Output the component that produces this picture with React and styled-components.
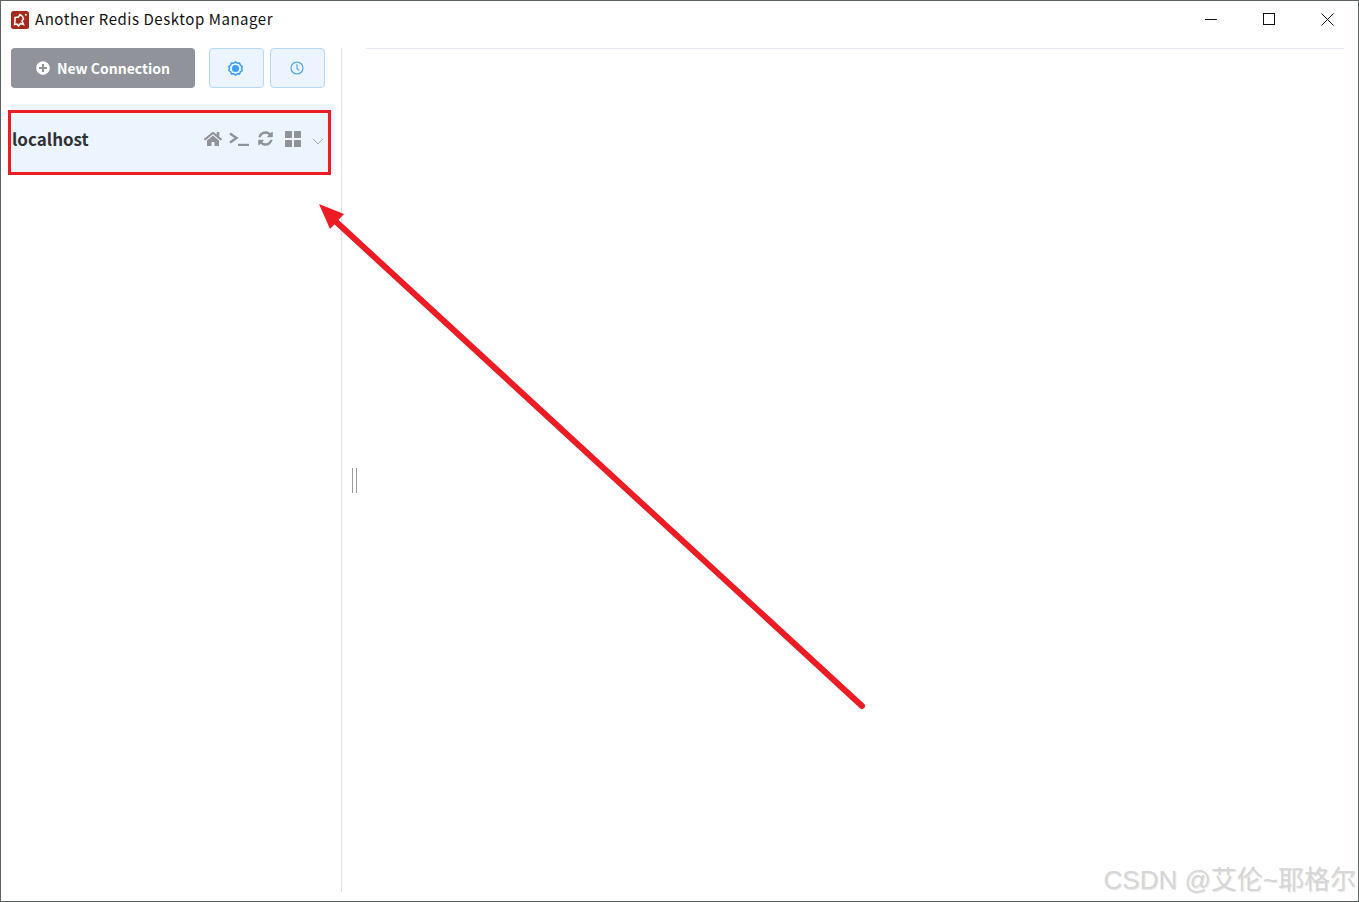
import React from 'react';
import styled, { createGlobalStyle } from 'styled-components';
import { FaHome, FaPlusCircle } from 'react-icons/fa';

const Global = createGlobalStyle`
  html, body { margin: 0; padding: 0; background: #fff; }
  * { box-sizing: border-box; }
`;

const Window = styled.div`
  position: relative;
  width: 1359px;
  height: 902px;
  overflow: hidden;
  border: 1px solid #5c6262;
  background: #fff;
  font-family: "Noto Sans CJK SC", "Noto Sans", sans-serif;
  display: flex;
  flex-direction: column;
`;

const TitleBar = styled.header`
  height: 37px;
  flex: none;
  display: flex;
  align-items: center;
  padding: 0 1px 0 10px;
`;

const TitleText = styled.span`
  margin: -2px 0 0 6px;
  font-size: 15px;
  letter-spacing: 0.55px;
  color: #111;
  flex: 1;
`;

const WinButton = styled.div`
  width: 58.5px;
  height: 37px;
  display: flex;
  align-items: center;
  justify-content: center;
  padding-bottom: 1px;
`;

const Body = styled.div`
  flex: 1;
  display: flex;
  padding: 10px 14px 9px 0;
  min-height: 0;
`;

const Sidebar = styled.aside`
  width: 341px;
  flex: none;
  padding: 0 7px 0 10px;
  border-right: 1px solid #dcdfe6;
`;

const Toolbar = styled.div`
  display: flex;
  height: 40px;
`;

const NewButton = styled.div`
  width: 184px;
  height: 40px;
  border-radius: 4px;
  background: #909399;
  color: #fff;
  display: flex;
  align-items: center;
  justify-content: center;
  gap: 7px;
  font-size: 14px;
  font-weight: 700;
  margin-right: 14px;
`;

const IconButton = styled.div`
  width: 55px;
  height: 40px;
  border: 1px solid #b3d8ff;
  border-radius: 4px;
  background: #ecf5ff;
  color: #409eff;
  display: flex;
  align-items: center;
  justify-content: center;
  padding-right: 2px;
  margin-right: 6px;
`;

const ConnRow = styled.div`
  margin-top: 16px;
  height: 70px;
  background: #ecf4fe;
  display: flex;
  align-items: center;
  padding: 2px 0 0 1px;
`;

const ConnName = styled.span`
  flex: 1;
  font-size: 17px;
  font-weight: 700;
  color: #303133;
  margin-top: -4px;
`;

const ConnIcons = styled.div`
  display: flex;
  align-items: center;
  color: #8f9298;
  margin-right: 10px;
  margin-top: -3px;
`;

const ConnIcon = styled.span`
  display: flex;
  margin-left: ${p => p.$gap}px;
  margin-top: ${p => p.$drop || 0}px;
`;

const HandleColumn = styled.div`
  width: 24px;
  flex: none;
  display: flex;
  align-items: center;
  padding: 20px 0 0 10px;
`;

const Handle = styled.div`
  width: 5px;
  height: 25px;
  border-left: 1px solid #9c9c9c;
  border-right: 1px solid #9c9c9c;
`;

const Main = styled.main`
  flex: 1;
  border-top: 1px solid #e6e9f2;
`;

const Highlight = styled.div`
  position: absolute;
  left: 7px;
  top: 109px;
  width: 323px;
  height: 65px;
  border: 3px solid #ed1c24;
`;

const Arrow = styled.svg`
  position: absolute;
  left: -1px;
  top: -1px;
  pointer-events: none;
`;

const Watermark = styled.div`
  position: absolute;
  right: 2px;
  bottom: 2px;
  font-family: "Liberation Sans", "Noto Sans CJK SC", sans-serif;
  font-size: 26px;
  line-height: 38px;
  color: #d6d6d6;
  text-shadow: 1px 1px 1px rgba(0, 0, 0, 0.1);
  white-space: nowrap;
`;

const Logo = () => (
  <svg width="18" height="18" viewBox="0 0 18 18">
    <rect width="18" height="18" rx="2.5" fill="#a32a1c" />
    <path d="M4 6.500l3.500-.5 1.500-2.500 2.500 2 1 2.500-1.500 2 1.500 3.500-3-1-2 2.500-1.500-2-2.500.5 .5-3.500z" fill="none" stroke="#fff" strokeWidth="1.500" />
    <circle cx="14.800" cy="3.800" r="1" fill="#fff" />
  </svg>
);

const Gear = () => (
  <svg width="15" height="15" viewBox="0 0 14 14">
    <path d="M7 .8l1.700 1.300 2.100-.1.800 2 1.700 1.100L12.700 7l.6 1.900-1.700 1.100-.8 2-2.100-.1L7 13.200l-1.700-1.300-2.100.1-.8-2L.7 8.900 1.300 7 .7 5.100 2.400 4l.8-2 2.100.1z" fill="none" stroke="currentColor" strokeWidth="1.400" />
    <circle cx="7" cy="7" r="3.300" fill="currentColor" />
  </svg>
);

const Clock = () => (
  <svg width="14" height="14" viewBox="0 0 14 14" fill="none" stroke="currentColor" strokeWidth="1.100">
    <circle cx="7" cy="7" r="6" />
    <path d="M7 3.300V7.400L9.200 9.300" />
  </svg>
);

const Chevron = () => (
  <svg width="12" height="7" viewBox="0 0 12 7" fill="none" stroke="#a5a8ae" strokeWidth="1">
    <path d="M.8.800L6 5.800 11.200.8" />
  </svg>
);

const Prompt = () => (
  <svg width="20" height="14" viewBox="0 0 20 14" fill="none" stroke="currentColor" strokeWidth="2.400">
    <path d="M1 1.500L7.500 6 1 10.500" />
    <path d="M9 13h11" />
  </svg>
);

const Refresh = () => (
  <svg width="17" height="17" viewBox="0 0 1792 1792" fill="currentColor">
    <path d="M1639 1056q0 5-1 7-64 268-268 434.500t-478 166.500q-146 0-282.500-55t-243.500-157l-129 129q-19 19-45 19t-45-19-19-45v-448q0-26 19-45t45-19h448q26 0 45 19t19 45-19 45l-137 137q71 66 161 102t187 36q134 0 250-65t186-179q11-17 53-117 8-23 30-23h192q13 0 22.500 9.500t9.500 22.500zm25-800v448q0 26-19 45t-45 19h-448q-26 0-45-19t-19-45 19-45l138-138q-148-137-349-137-134 0-250 65t-186 179q-11 17-53 117-8 23-30 23h-199q-13 0-22.500-9.500t-9.500-22.500v-7q65-268 270-434.500t480-166.500q146 0 284 55.500t245 156.500l130-129q19-19 45-19t45 19 19 45z" />
  </svg>
);

const Grid = () => (
  <svg width="16" height="16" viewBox="0 0 16 16" fill="currentColor">
    <rect x="0" y="0" width="7" height="7" rx=".6" />
    <rect x="9" y="0" width="7" height="7" rx=".6" />
    <rect x="0" y="9" width="7" height="7" rx=".6" />
    <rect x="9" y="9" width="7" height="7" rx=".6" />
  </svg>
);

export default function App() {
  return (
    <>
      <Global />
      <Window>
        <TitleBar>
          <Logo />
          <TitleText>Another Redis Desktop Manager</TitleText>
          <WinButton>
            <svg width="12" height="12" viewBox="0 0 12 12"><path d="M0 6.500h12" stroke="#111" strokeWidth="1" /></svg>
          </WinButton>
          <WinButton>
            <svg width="12" height="12" viewBox="0 0 12 12"><rect x=".5" y=".5" width="11" height="11" fill="none" stroke="#111" /></svg>
          </WinButton>
          <WinButton>
            <svg width="13" height="13" viewBox="0 0 13 13"><path d="M.5.500l12 12M12.500.500l-12 12" stroke="#111" strokeWidth="1" /></svg>
          </WinButton>
        </TitleBar>
        <Body>
          <Sidebar>
            <Toolbar>
              <NewButton><FaPlusCircle size={14} />New Connection</NewButton>
              <IconButton><Gear /></IconButton>
              <IconButton><Clock /></IconButton>
            </Toolbar>
            <ConnRow>
              <ConnName>localhost</ConnName>
              <ConnIcons>
                <ConnIcon $gap={0}><FaHome size={18} /></ConnIcon>
                <ConnIcon $gap={7}><Prompt /></ConnIcon>
                <ConnIcon $gap={8}><Refresh /></ConnIcon>
                <ConnIcon $gap={11}><Grid /></ConnIcon>
                <ConnIcon $gap={11} $drop={5}><Chevron /></ConnIcon>
              </ConnIcons>
            </ConnRow>
          </Sidebar>
          <HandleColumn><Handle /></HandleColumn>
          <Main />
        </Body>
        <Highlight />
        <Arrow width="1359" height="902" viewBox="0 0 1359 902">
          <path d="M862 706L332 218" stroke="#ed1c24" strokeWidth="6" strokeLinecap="round" fill="none" />
          <path d="M319 204L344 214 330 229z" fill="#ed1c24" />
        </Arrow>
        <Watermark>CSDN @艾伦~耶格尔</Watermark>
      </Window>
    </>
  );
}
